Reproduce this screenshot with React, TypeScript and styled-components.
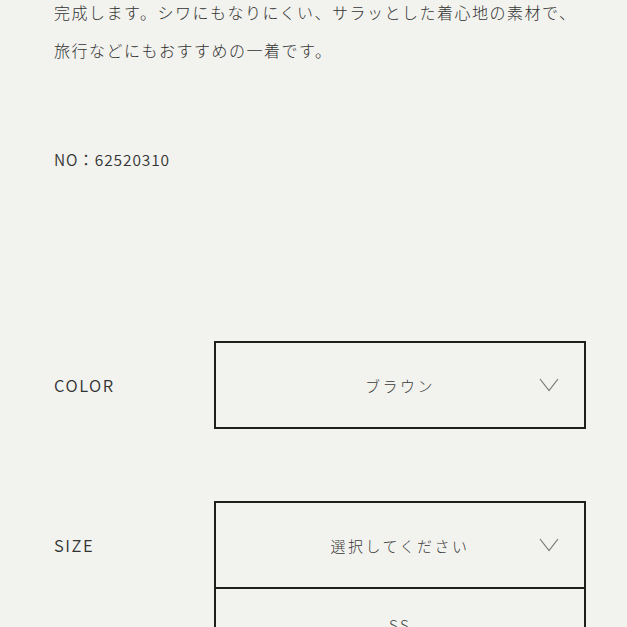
import React from "react";
import styled, { createGlobalStyle } from "styled-components";

const GlobalStyle = createGlobalStyle`
  html, body {
    margin: 0;
    padding: 0;
    background: #f2f2ee;
    overflow: hidden;
  }
  body {
    font-family: "Noto Sans CJK JP", "Noto Sans", sans-serif;
    color: #333333;
  }
`;

const Page = styled.div`
  width: 627px;
  height: 627px;
  overflow: hidden;
  padding: 0 41px 0 54px;
  box-sizing: border-box;
`;

const Description = styled.p`
  margin: -7px 0 0;
  font-size: 16px;
  line-height: 38px;
  letter-spacing: 1.5px;
  font-weight: 300;
  white-space: nowrap;
`;

const ItemNo = styled.p`
  margin: 78px 0 0;
  font-size: 15.5px;
  line-height: 24px;
  letter-spacing: 0.9px;
  font-weight: 350;
`;

const Options = styled.div`
  margin-top: 170px;
  display: flex;
  flex-direction: column;
  gap: 72px;
`;

const OptionRow = styled.div`
  display: grid;
  grid-template-columns: 160px 372px;
  align-items: start;
`;

const Label = styled.div`
  height: 88px;
  display: flex;
  align-items: center;
  font-size: 16.5px;
  letter-spacing: 1.5px;
  font-weight: 350;
`;

const SelectStack = styled.div`
  display: flex;
  flex-direction: column;
`;

const SelectBox = styled.div<{ $joined?: boolean }>`
  position: relative;
  height: 88px;
  box-sizing: border-box;
  border: 2px solid #1e1e1c;
  margin-top: ${(p) => (p.$joined ? "-2px" : "0")};
  padding-bottom: ${(p) => (p.$joined ? "14px" : "0")};
  display: flex;
  align-items: center;
  justify-content: center;
  font-size: 15px;
  letter-spacing: 2.5px;
  font-weight: 300;
  color: #3a3a3a;
`;

const Chevron = styled.svg`
  position: absolute;
  right: 25px;
  top: 50%;
  margin-top: -7px;
  width: 20px;
  height: 14px;
`;

const Arrow = () => (
  <Chevron viewBox="0 0 20 14" fill="none">
    <path d="M1 1 L10 12.5 L19 1" stroke="#787878" strokeWidth="1.2" />
  </Chevron>
);

export default function App() {
  return (
    <>
      <GlobalStyle />
      <Page>
        <Description>
          完成します。シワにもなりにくい、サラッとした着心地の素材で、
          <br />
          旅行などにもおすすめの一着です。
        </Description>
        <ItemNo>NO：62520310</ItemNo>
        <Options>
          <OptionRow>
            <Label>COLOR</Label>
            <SelectStack>
              <SelectBox>
                ブラウン
                <Arrow />
              </SelectBox>
            </SelectStack>
          </OptionRow>
          <OptionRow>
            <Label>SIZE</Label>
            <SelectStack>
              <SelectBox>
                選択してください
                <Arrow />
              </SelectBox>
              <SelectBox $joined>SS</SelectBox>
            </SelectStack>
          </OptionRow>
        </Options>
      </Page>
    </>
  );
}
